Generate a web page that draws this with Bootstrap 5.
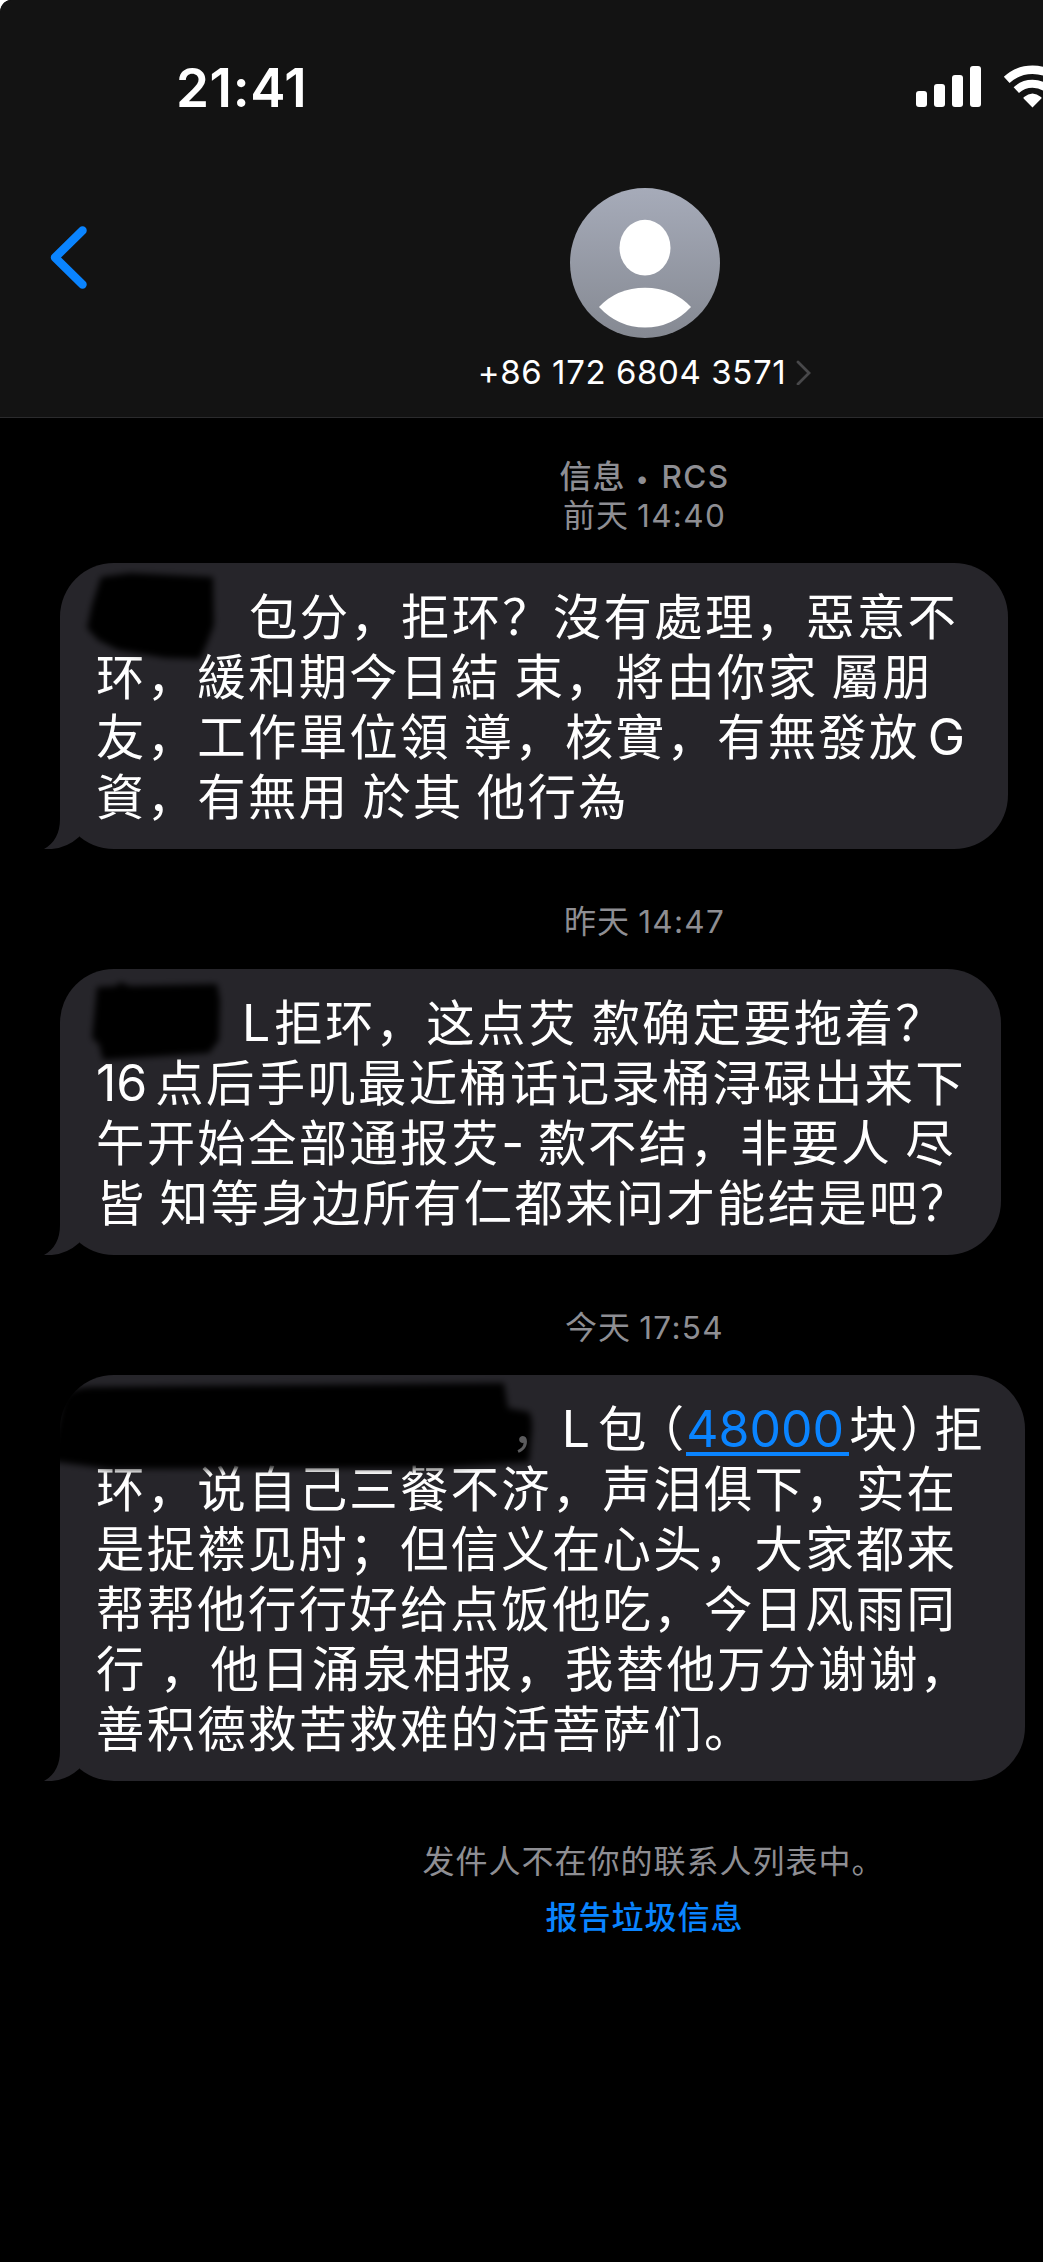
<!DOCTYPE html>
<html lang="zh-CN">
<head>
<meta charset="utf-8">
<meta name="viewport" content="width=device-width, initial-scale=1">
<title>信息</title>
<link href="https://cdn.jsdelivr.net/npm/bootstrap@5.3.0/dist/css/bootstrap.min.css" rel="stylesheet">
<style>
  body { background: #fff; overflow-x: hidden; }
  .screen { height: 2262px; background: #000; border-top-left-radius: 11px 13px; font-family: "Noto Sans CJK SC", sans-serif; color: #fff; }
  .topbar { height: 418px; background: #131313; border-bottom: 1px solid #2b2b2d; }
  .statusbar { height: 188px; padding: 65px 0 0 176px; }
  .clock { font: 600 53px/46px Inter, sans-serif; letter-spacing: .6px; }
  .statusicons { width: 127px; height: 44px; }
  .backbtn { width: 247px; padding: 37px 0 0 49px; }
  .avatar { width: 150px; height: 150px; }
  .phone { font: 400 33px/40px Inter, sans-serif; letter-spacing: .6px; margin-top: 14px; }
  .meta { padding-left: 246px; font-size: 32px; line-height: 39px; letter-spacing: 1px; color: #8e8e93; }
  .meta .lat { font-family: Inter, sans-serif; font-size: 31.5px; line-height: 1; letter-spacing: 1.3px; }
  .meta .dot { font-size: 24px; vertical-align: 1px; margin: 0 2px; }
  .bubble { margin-left: 60px; padding: 21px 0 25px 36px; background: #26252a; border-radius: 54px; font-size: 48.4px; line-height: 60px; letter-spacing: 2.27px; white-space: nowrap; }
  .bubble .lat { font-family: Inter, sans-serif; font-size: 50px; line-height: 1; letter-spacing: 0; }
  .tail { position: absolute; left: -16px; bottom: 0; width: 52px; height: 60px; }
  .ink { position: absolute; left: -10px; top: -5px; overflow: visible; }
  .gap { display: inline-block; }
  .popen { margin-left: -13px; }
  .pclose { margin-right: -16px; }
  .faded { position: relative; z-index: 1; color: #5c5c5e; }
  .bubble .sum { color: #0a84ff; text-decoration: none; padding-right: 5px; background: linear-gradient(#0a84ff, #0a84ff) 0 calc(100% - 3px) / 100% 4px no-repeat; }
  .report { color: #0a84ff; }
</style>
</head>
<body>
<main class="screen overflow-hidden">
  <header class="topbar">
    <div class="statusbar d-flex justify-content-between">
      <div class="clock">21:41</div>
      <svg class="statusicons" viewBox="916 65 127 44" fill="#fff">
        <rect x="916" y="91" width="11" height="16" rx="3"/>
        <rect x="934" y="84" width="11" height="23" rx="3"/>
        <rect x="952" y="75" width="11" height="32" rx="3"/>
        <rect x="970" y="66" width="11" height="41" rx="3"/>
        <g fill="none" stroke="#fff">
          <path d="M1006.7 79.9A37.8 37.8 0 0 1 1058.3 79.9" stroke-width="8.4"/>
          <path d="M1016.3 90.1A23.8 23.8 0 0 1 1048.7 90.1" stroke-width="7.8"/>
        </g>
        <path d="M1032.5 107.5L1023.6 98.6Q1023 97.7 1024 97Q1032.5 90 1041 97Q1042 97.7 1041.4 98.6Z"/>
      </svg>
    </div>
    <div class="d-flex">
      <a class="backbtn flex-shrink-0" href="#" aria-label="返回">
        <svg class="d-block" width="40" height="66" viewBox="50 225 40 66" fill="none" stroke="#0a84ff" stroke-width="8.5" stroke-linecap="round" stroke-linejoin="round"><path d="M83.5 230.5L56 257.5L83.5 284.5"/></svg>
      </a>
      <div class="flex-grow-1 d-flex flex-column align-items-center">
        <svg class="avatar" viewBox="0 0 150 150">
          <defs><linearGradient id="av" x1="0" y1="0" x2="0" y2="1"><stop offset="0" stop-color="#a6abb9"/><stop offset="1" stop-color="#858992"/></linearGradient></defs>
          <circle cx="75" cy="75" r="75" fill="url(#av)"/>
          <ellipse cx="75" cy="59.7" rx="25.5" ry="27.9" fill="#fff"/>
          <path d="M29 119Q47 99.7 75 99.7Q103 99.7 121 119Q102 139.5 75 139.5Q48 139.5 29 119Z" fill="#fff"/>
        </svg>
        <div class="phone d-flex align-items-center"><span>+86 172 6804 3571</span>
          <svg class="ms-2" width="18" height="26" viewBox="0 0 18 26" fill="none" stroke="#48484a" stroke-width="2.8" stroke-linecap="round"><path d="M4 3L15 14L4 25"/></svg>
        </div>
      </div>
    </div>
  </header>

  <section>
    <div class="meta text-center" style="padding-top:37px">
      <div class="fw-medium">信息 <span class="lat"><span class="dot">•</span> RCS</span></div>
      <div>前天 <span class="lat">14:40</span></div>
    </div>

    <div class="bubble position-relative" style="width:948px;margin-top:30px">
      <svg class="tail" viewBox="0 0 52 60"><path d="M16 0V30Q16 51 0 60Q20 61.5 35 48V0Z" fill="#26252a"/></svg>
      <div><span class="gap" style="width:153px"></span>包分，拒环？沒有處理，惡意不</div>
      <div>环，緩和期今日結 束，將由你家 屬朋</div>
      <div>友，工作單位領 導，核實，有無發放<span class="lat ms-1 ps-1">G</span></div>
      <div>資，有無用 於其 他行為</div>
      <svg class="ink" width="200" height="110" viewBox="50 558 200 110"><path filter="url(#soft)" d="M101 577L130 573L213 577L214 625L208 641L200 659L165 658L118 650L98 640L87 628L92 605Z"/></svg>
    </div>

    <div class="meta text-center" style="padding-top:51px"><div>昨天 <span class="lat">14:47</span></div></div>

    <div class="bubble position-relative" style="width:941px;margin-top:30px">
      <svg class="tail" viewBox="0 0 52 60"><path d="M16 0V30Q16 51 0 60Q20 61.5 35 48V0Z" fill="#26252a"/></svg>
      <div><span class="gap" style="width:146px"></span><span class="lat me-1">L</span><span class="ps-0">拒</span>环，这点芡 歀确定要拖着？</div>
      <div><span class="lat">16</span><span class="ms-2">点</span>后手叽最近桶话记录桶浔碌出来下</div>
      <div>午开始全部通报芡<span class="lat">-</span> 歀不结，非要人 尽</div>
      <div>皆 知等身边所有仁都来问才能结是吧？</div>
      <svg class="ink" width="200" height="110" viewBox="50 964 200 110"><path filter="url(#soft)" d="M97 987L116 986L120 982L130 986L217 984L220 1000L219 1040L209 1053L165 1056L103 1060L99 1044L92 1038Z"/></svg>
    </div>

    <div class="meta text-center" style="padding-top:51px"><div>今天 <span class="lat">17:54</span></div></div>

    <div class="bubble position-relative" style="width:965px;margin-top:30px">
      <svg class="tail" viewBox="0 0 52 60"><path d="M16 0V30Q16 51 0 60Q20 61.5 35 48V0Z" fill="#26252a"/></svg>
      <div><span class="gap" style="width:415px"></span><span class="faded">，</span><span class="lat me-2">L</span>包<span class="popen">（</span><a class="lat sum" href="#">48000</a>块<span class="pclose">）</span>拒</div>
      <div>环，说自己三餐不济，声泪俱下，实在</div>
      <div>是捉襟见肘；但信义在心头，大家都来</div>
      <div>帮帮他行行好给点饭他吃，今日风雨同</div>
      <div>行 ，他日涌泉相报，我替他万分谢谢，</div>
      <div>善积德救苦救难的活菩萨们。</div>
      <svg class="ink" width="500" height="110" viewBox="50 1370 500 110"><path filter="url(#soft)" d="M62 1402Q66 1388 90 1387L180 1386L504 1383L508 1408L529 1412Q534 1420 531 1440L529 1462L440 1468L110 1469L50 1461Z"/></svg>
    </div>

    <div class="meta text-center" style="padding-top:59px">
      <div style="padding-left:18px">发件人不在你的联系人列表中。</div>
      <a class="report d-block text-decoration-none fw-medium" href="#" style="margin-top:17px">报告垃圾信息</a>
    </div>
  </section>
  <svg class="position-absolute" width="0" height="0"><defs><filter id="soft" x="-10%" y="-20%" width="120%" height="140%"><feGaussianBlur stdDeviation="3"/></filter></defs></svg>
</main>
<script src="https://cdn.jsdelivr.net/npm/bootstrap@5.3.0/dist/js/bootstrap.bundle.min.js"></script>
</body>
</html>
